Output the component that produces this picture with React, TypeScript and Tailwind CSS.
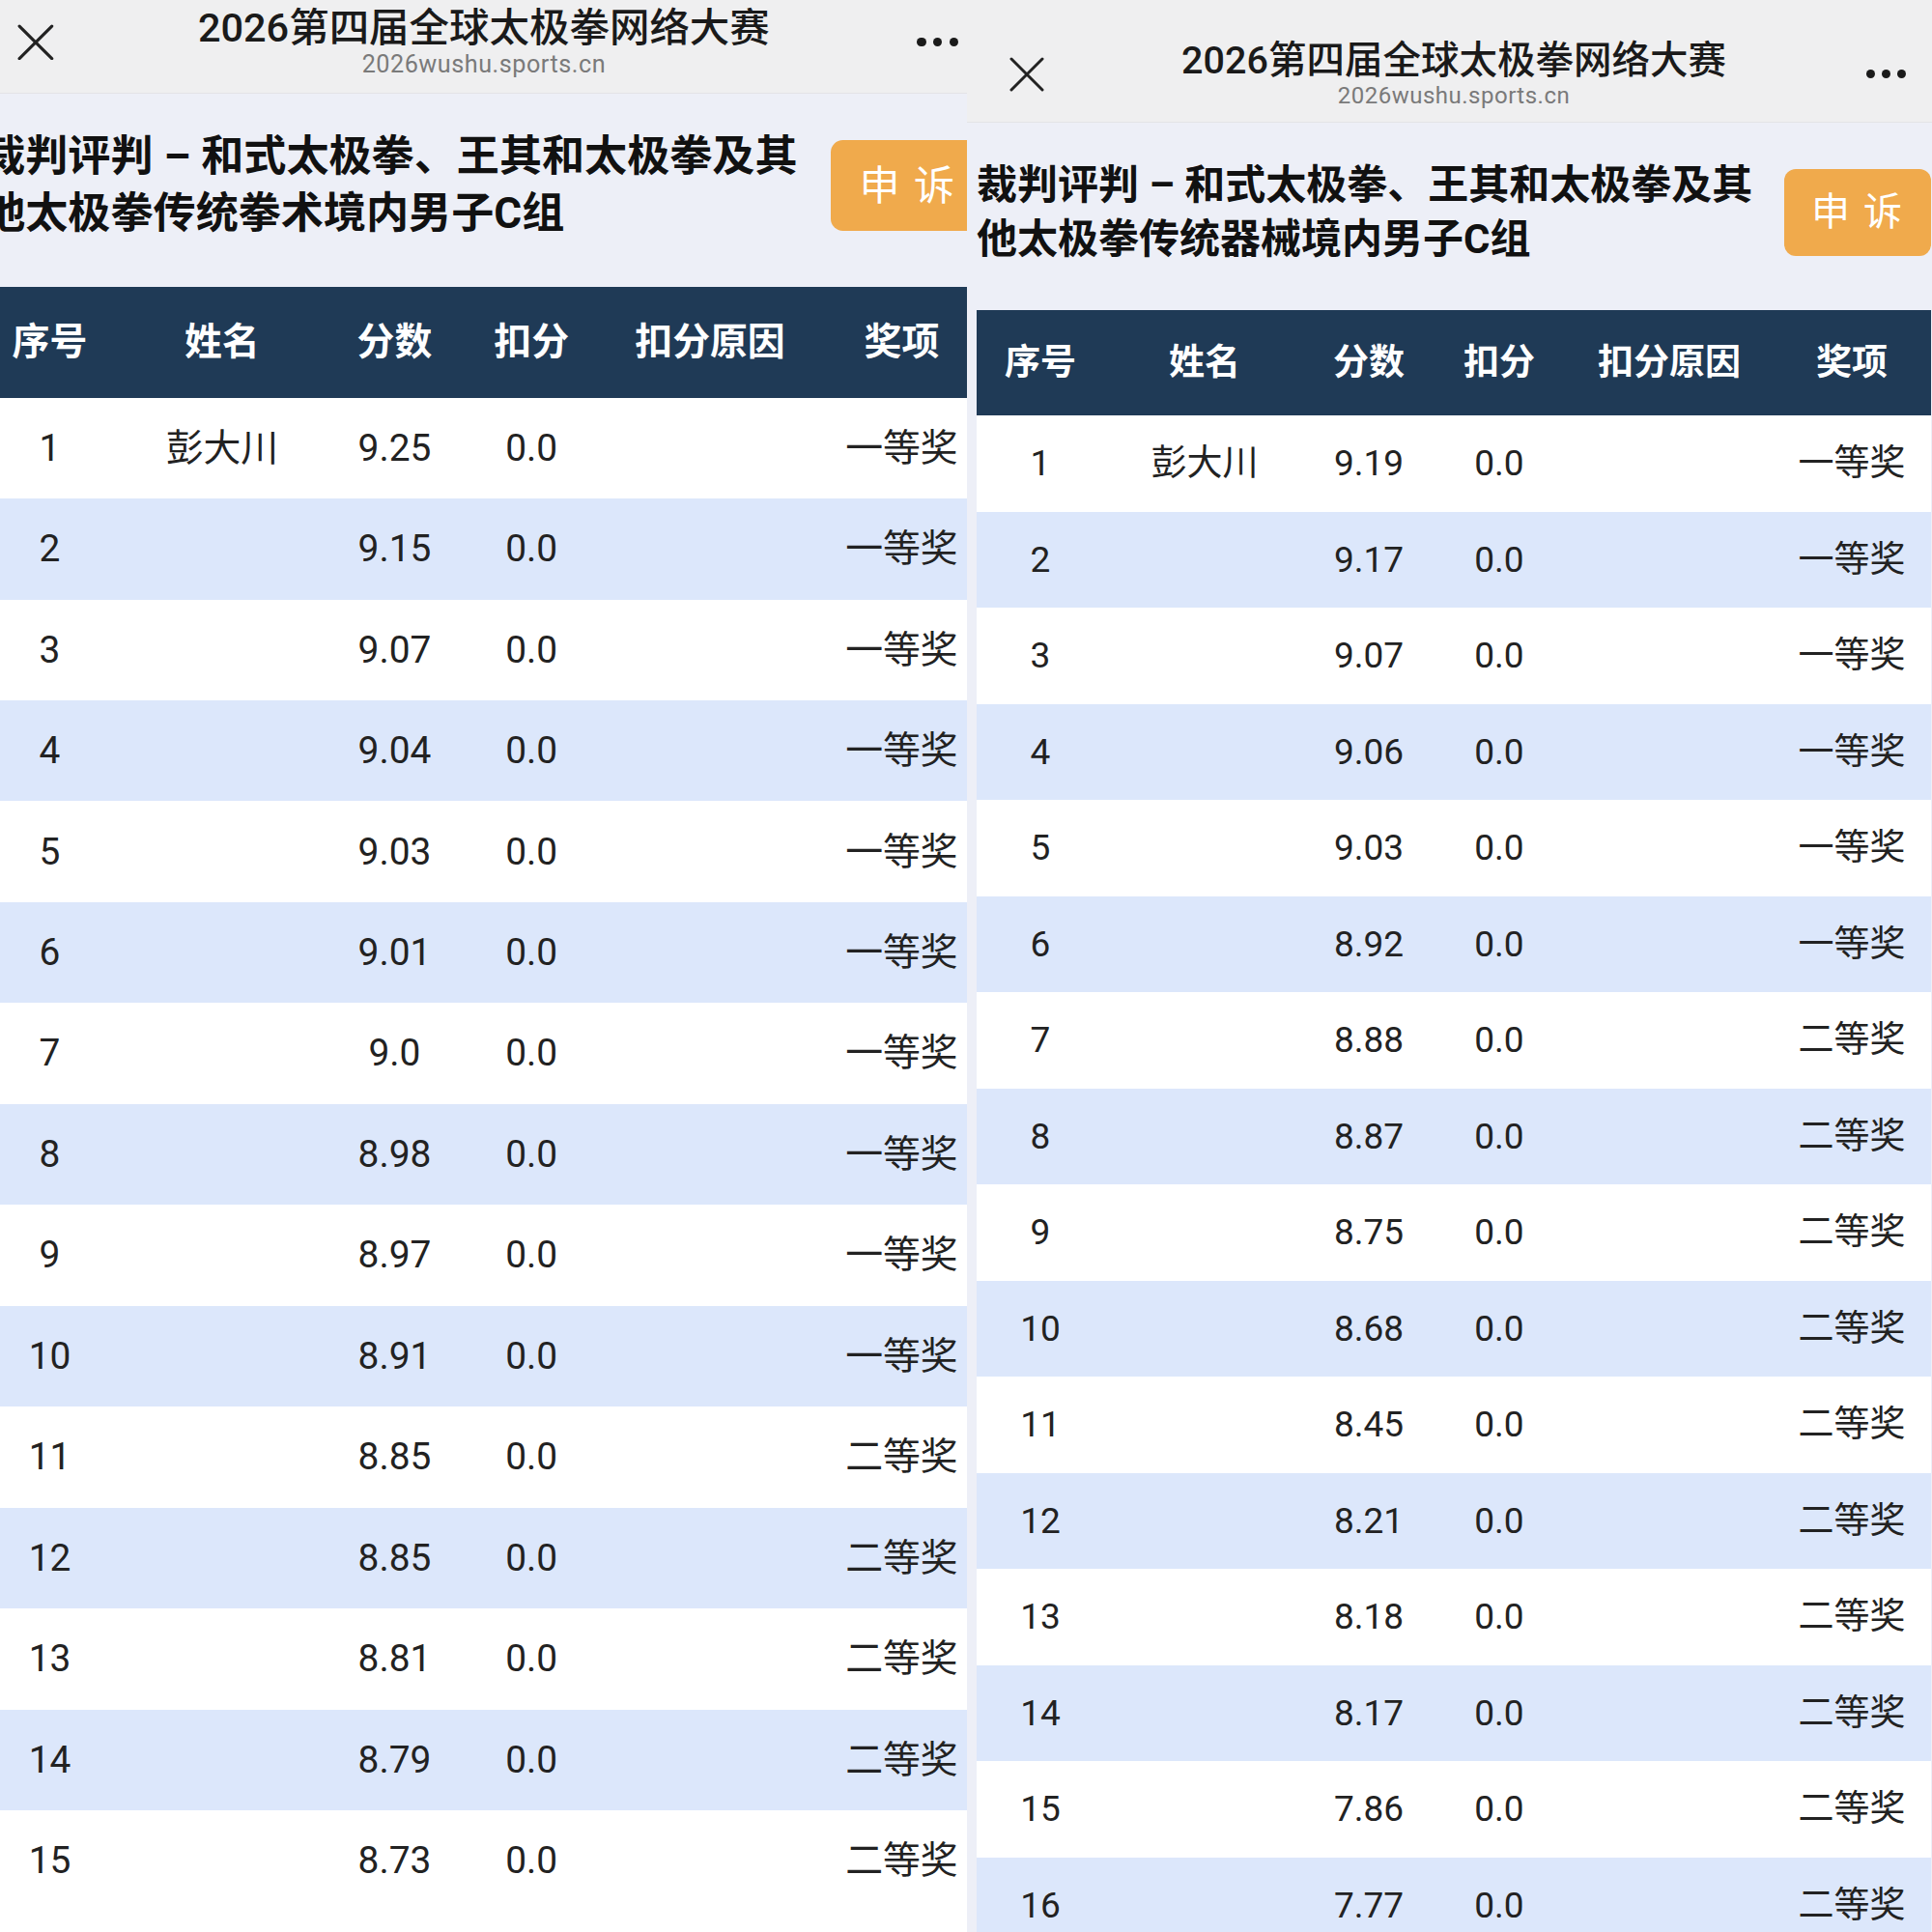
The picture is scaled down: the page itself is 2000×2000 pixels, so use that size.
import React from "react"

type Row = { no: number; name?: string; score: string; award: string }

const leftRows: Row[] = [
  { no: 1, name: "彭大川", score: "9.25", award: "一等奖" },
  { no: 2, score: "9.15", award: "一等奖" },
  { no: 3, score: "9.07", award: "一等奖" },
  { no: 4, score: "9.04", award: "一等奖" },
  { no: 5, score: "9.03", award: "一等奖" },
  { no: 6, score: "9.01", award: "一等奖" },
  { no: 7, score: "9.0", award: "一等奖" },
  { no: 8, score: "8.98", award: "一等奖" },
  { no: 9, score: "8.97", award: "一等奖" },
  { no: 10, score: "8.91", award: "一等奖" },
  { no: 11, score: "8.85", award: "二等奖" },
  { no: 12, score: "8.85", award: "二等奖" },
  { no: 13, score: "8.81", award: "二等奖" },
  { no: 14, score: "8.79", award: "二等奖" },
  { no: 15, score: "8.73", award: "二等奖" },
]

const rightRows: Row[] = [
  { no: 1, name: "彭大川", score: "9.19", award: "一等奖" },
  { no: 2, score: "9.17", award: "一等奖" },
  { no: 3, score: "9.07", award: "一等奖" },
  { no: 4, score: "9.06", award: "一等奖" },
  { no: 5, score: "9.03", award: "一等奖" },
  { no: 6, score: "8.92", award: "一等奖" },
  { no: 7, score: "8.88", award: "二等奖" },
  { no: 8, score: "8.87", award: "二等奖" },
  { no: 9, score: "8.75", award: "二等奖" },
  { no: 10, score: "8.68", award: "二等奖" },
  { no: 11, score: "8.45", award: "二等奖" },
  { no: 12, score: "8.21", award: "二等奖" },
  { no: 13, score: "8.18", award: "二等奖" },
  { no: 14, score: "8.17", award: "二等奖" },
  { no: 15, score: "7.86", award: "二等奖" },
  { no: 16, score: "7.77", award: "二等奖" },
]

const cols = "grid grid-cols-[132px_208px_132px_138px_214px_164px] items-center text-center"

function CloseIcon() {
  return (
    <svg width="36" height="36" viewBox="0 0 36 36" fill="none">
      <path d="M2 2L34 34M34 2L2 34" stroke="#222" strokeWidth="3" strokeLinecap="round" />
    </svg>
  )
}

function MoreDots() {
  return (
    <div className="flex gap-[7px]">
      <span className="w-[9px] h-[9px] rounded-full bg-[#1a1a1a]" />
      <span className="w-[9px] h-[9px] rounded-full bg-[#1a1a1a]" />
      <span className="w-[9px] h-[9px] rounded-full bg-[#1a1a1a]" />
    </div>
  )
}

function Phone({ line2, rows, titleRow }: { line2: string; rows: Row[]; titleRow: string }) {
  return (
    <div className="w-[1008px] bg-[#edeff7] font-['Roboto','Noto_Sans_CJK_SC',sans-serif]">
      {/* nav bar */}
      <div className="h-[127px] pt-[27px] flex items-center bg-[#efeff0] border-b border-[#e3e3e6]">
        <div className="w-[120px] pl-[44px]">
          <CloseIcon />
        </div>
        <div className="flex-1 flex flex-col items-center">
          <div className="text-[39.5px] leading-[44px] font-medium text-[#1a1a1a]">2026第四届全球太极拳网络大赛</div>
          <div className="text-[24px] leading-[28px] text-[#7a7a7a] tracking-[0.5px]">2026wushu.sports.cn</div>
        </div>
        <div className="w-[120px] pr-[36px] flex justify-end">
          <MoreDots />
        </div>
      </div>

      <div className="px-[10px]">
        {/* title */}
        <div className={`flex items-center justify-between ${titleRow}`}>
          <div className="text-[42px] leading-[56px] font-bold text-[#111]">
            裁判评判 – 和式太极拳、王其和太极拳及其
            <br />
            {line2}
          </div>
          <div className="w-[152px] h-[90px] shrink-0 rounded-[12px] bg-[#f0aa4c] flex items-center justify-center text-white text-[40px] tracking-[2px]">
            申 诉
          </div>
        </div>

        {/* table */}
        <div className={`${cols} h-[109px] bg-[#1f3a56] text-white text-[37px] font-bold`}>
          <div>序号</div>
          <div>姓名</div>
          <div>分数</div>
          <div>扣分</div>
          <div>扣分原因</div>
          <div>奖项</div>
        </div>
        {rows.map((r, i) => (
          <div
            key={r.no}
            className={`${cols} h-[99.5px] text-[37px] text-[#222] ${i % 2 === 1 ? "bg-[#dce7fb]" : "bg-white"}`}
          >
            <div>{r.no}</div>
            <div>{r.name ?? ""}</div>
            <div>{r.score}</div>
            <div>0.0</div>
            <div></div>
            <div>{r.award}</div>
          </div>
        ))}
        <div className="h-[200px] bg-white" />
      </div>
    </div>
  )
}

export default function App() {
  return (
    <div className="flex w-[2000px] h-[2000px] overflow-hidden bg-white">
      <div className="w-[1001px] h-[2000px] shrink-0 overflow-hidden">
        <div className="-ml-[27px] -mt-[35px] [zoom:1.05]">
          <Phone line2="他太极拳传统拳术境内男子C组" rows={leftRows} titleRow="pt-[35px] pb-[44px]" />
        </div>
      </div>
      <div className="flex-1 h-[2000px] overflow-hidden">
        <Phone line2="他太极拳传统器械境内男子C组" rows={rightRows} titleRow="pt-[37px] pb-[45px]" />
      </div>
    </div>
  )
}
